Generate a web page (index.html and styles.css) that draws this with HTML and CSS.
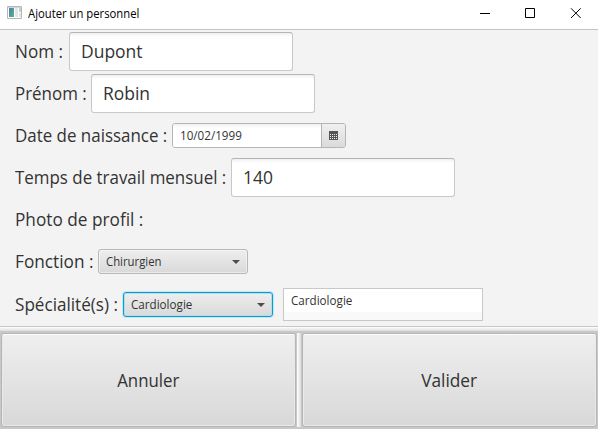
FILE: index.html
```html
<!DOCTYPE html>
<html lang="fr">
<head>
<meta charset="utf-8">
<title>Ajouter un personnel</title>
<link rel="stylesheet" href="styles.css">
</head>
<body>
<div class="window">
  <header class="titlebar">
    <svg class="app-icon" width="15" height="13" viewBox="0 0 15 13">
      <defs><linearGradient id="pane" x1="0" y1="0" x2="1" y2="1"><stop offset="0" stop-color="#477fae"/><stop offset="1" stop-color="#62b283"/></linearGradient></defs>
      <path fill="#fff" stroke="#b4b8bb" d="M.5.5h14v12H.5z"/>
      <path fill="#d3d6d8" d="M1 1h13v1H1z"/>
      <path fill="url(#pane)" d="M2 2h5v9H2z"/>
      <path fill="#e3e5e6" d="M8 2h3v9H8z"/>
      <path fill="#b8d8cb" d="M12 2h2v4h-2z"/>
      <path fill="#e1e5e7" d="M12 7h2v4h-2z"/>
    </svg>
    <h1 class="title"><span>Ajouter un personnel</span></h1>
    <svg class="controls" width="102" height="11" viewBox="0 0 102 11" fill="none" stroke="#000">
      <path d="M0 5.5h10M45.500 .5h9v9h-9z"/>
      <path d="M91 .3l9.700 9.700M100.700.3L91 10"/>
    </svg>
  </header>
  <main class="form">
    <div class="row"><label class="label w-nom"><span>Nom :</span></label><div class="field"><span>Dupont</span></div></div>
    <div class="row"><label class="label w-prenom"><span>Prénom :</span></label><div class="field"><span>Robin</span></div></div>
    <div class="row"><label class="label w-date"><span>Date de naissance :</span></label>
      <div class="date"><div class="date-text"><span>10/02/1999</span></div><div class="date-button">
        <svg width="9" height="9" viewBox="0 0 9 9"><path fill="#555" d="M0 0h9v9H0z"/><path fill="none" stroke="#eee" stroke-dasharray="1 1" d="M1 3.500h7M1 5.500h7M1 7.500h7"/></svg>
      </div></div></div>
    <div class="row"><label class="label w-temps"><span>Temps de travail mensuel :</span></label><div class="field"><span>140</span></div></div>
    <div class="row"><label class="label w-photo"><span>Photo de profil :</span></label></div>
    <div class="row"><label class="label w-fonction"><span>Fonction :</span></label>
      <div class="combo"><span class="function-name">Chirurgien</span><svg width="8" height="4" viewBox="0 0 8 4"><path fill="#4c4c4c" d="M0 0h8L4 4z"/></svg></div></div>
    <div class="row row-last"><label class="label w-spec"><span>Spécialité(s) :</span></label>
      <div class="combo focused"><span>Cardiologie</span><svg width="8" height="4" viewBox="0 0 8 4"><path fill="#4c4c4c" d="M0 0h8L4 4z"/></svg></div>
      <div class="list"><div class="item"><span>Cardiologie</span></div></div></div>
  </main>
  <div class="split-h"></div>
  <footer class="actions">
    <button class="action"><span class="cancel">Annuler</span></button>
    <div class="split-v"></div>
    <button class="action"><span>Valider</span></button>
  </footer>
</div>
</body>
</html>
```
FILE: styles.css
```css
* { box-sizing: border-box; }
body { margin: 0; overflow: hidden; }
.window {
  width: 598px; height: 429px; display: flex; flex-direction: column;
  background: #f3f3f3; color: #333;
  font-family: "Open Sans", "Noto Sans", sans-serif;
}
.titlebar {
  height: 30px; flex: none; display: flex; align-items: flex-start;
  padding: 6px 16px 0 7px; background: #fff; border-bottom: 1px solid #c4c4c4;
}
.app-icon { display: block; }
.title { margin: 0 0 0 6px; font-size: 12px; line-height: 16px; font-weight: 400; color: #000; white-space: nowrap; flex: 1; }
.controls { display: block; margin-top: 2px; }
.form { height: 296px; flex: none; }
.row { height: 42px; padding: 1px 0 0 15px; display: flex; align-items: center; }
.row-last { height: 44px; }
.label { flex: none; padding-bottom: 2px; font-size: 18px; line-height: 24px; white-space: nowrap; }
.w-nom { width: 54px; }
.w-prenom { width: 76px; }
.w-date { width: 157px; }
.w-temps { width: 216px; }
.w-photo { width: 132px; }
.w-fonction { width: 83px; }
.w-spec { width: 108px; }
.field {
  width: 224px; height: 39px; padding: 0 0 1px 11px; display: flex; align-items: center;
  font-size: 18px; line-height: 24px; background: linear-gradient(#f0f0f0, #fff 4px);
  border: 1px solid #c8c8c8; border-top-color: #b5b5b5; border-radius: 3px;
}
.date {
  width: 174px; height: 25px; display: flex; border: 1px solid #b5b5b5; border-radius: 3px;
  overflow: hidden; font-size: 12px; line-height: 16px;
}
.date-text { width: 148px; padding: 4px 0 0 7px; background: linear-gradient(#f0f0f0, #fff 4px); }
.date-button {
  flex: 1; display: flex; align-items: center; justify-content: center;
  border-left: 1px solid #b5b5b5; background: linear-gradient(#f0f0f0, #dadada);
}
.combo {
  width: 150px; height: 25px; padding: 0 7px; display: flex; align-items: center; justify-content: space-between;
  font-size: 12px; line-height: 16px; border: 1px solid #b8b8b8; border-radius: 3px;
  background: linear-gradient(#eee, #d9d9d9); box-shadow: inset 0 0 0 1px rgba(255, 255, 255, .45);
}
.focused { border-color: #039ed3; box-shadow: 0 0 0 1px #c9e6f0, inset 0 0 0 1px #b5dce9; }
.list { width: 200px; height: 33px; margin-left: 10px; border: 1px solid #c8c8c8; background: #f9f9f9; }
.item { height: 23px; padding: 4px 7px 0; background: #fff; font-size: 12px; line-height: 16px; }
.split-h { height: 7px; flex: none; border-top: 1px solid #c8c8c8; border-bottom: 2px solid #c8c8c8; background: linear-gradient(#fff, #dcdcdc); }
.actions { height: 96px; flex: none; display: flex; padding: 0 1px 2px; background: #c8c8c8; }
.action {
  flex: 1; margin: 0; padding: 0 0 1px; border: 1px solid #b5b5b5; border-radius: 3px;
  font: 18px/24px "Open Sans", "Noto Sans", sans-serif; color: #333;
  background: linear-gradient(#efefef, #d8d8d8); box-shadow: inset 0 1px #fff, inset 0 0 0 1px #e9e9e9;
}
.split-v { width: 6px; border: solid #c8c8c8; border-width: 0 1px; background: linear-gradient(90deg, #fff, #dcdcdc); }

/* Slightly condensed lettering */
.row span, .title span { display: inline-block; transform: scaleX(.97); transform-origin: 0 50%; white-space: nowrap; }
.title span { transform: scaleX(.94); }
.label span { transform: scaleX(.95); }
.w-prenom span { transform: scaleX(.94); }
.w-date span, .w-temps span { transform: scaleX(.94); }
.w-photo span, .w-fonction span { transform: scaleX(.957); }
.row .function-name { transform: scaleX(.945); }
.action span { display: inline-block; transform: scaleX(.96); }
.action .cancel { transform: scaleX(.935); }
```
